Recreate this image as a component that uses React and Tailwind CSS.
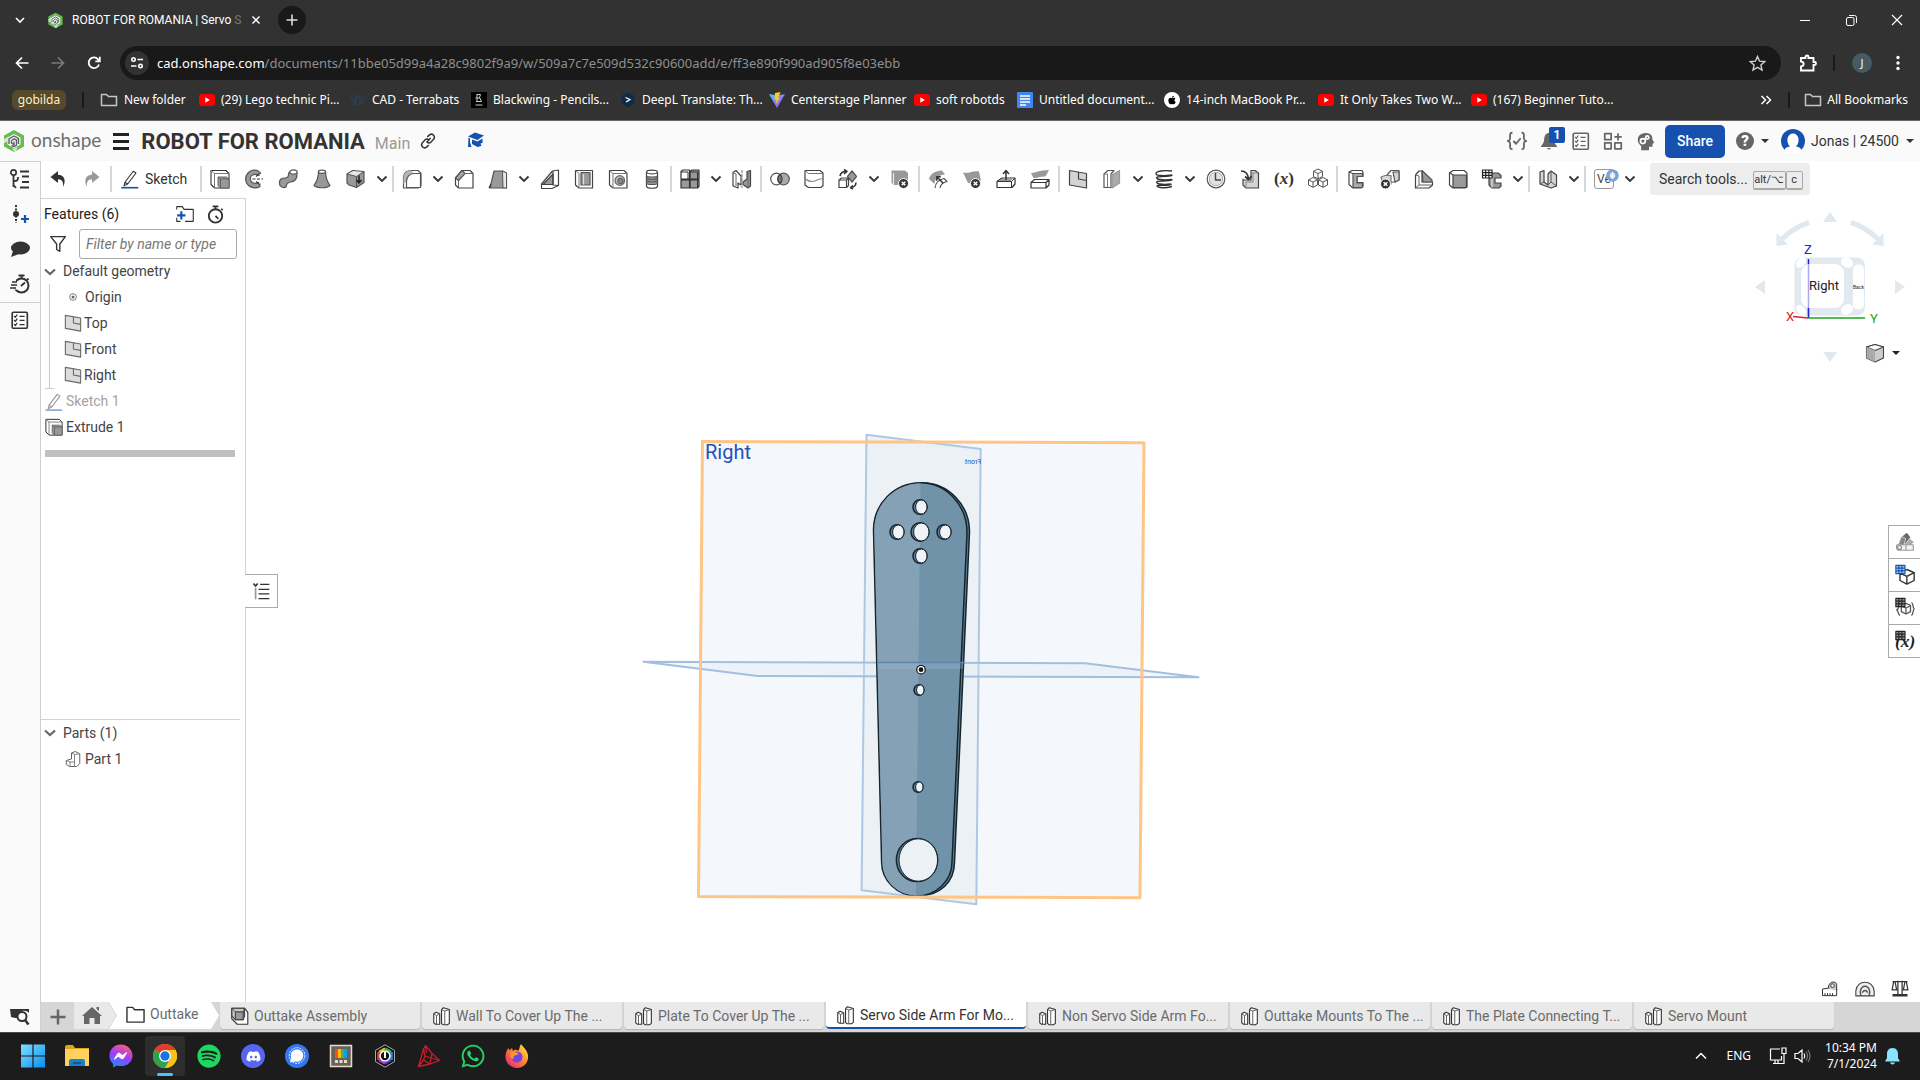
import React from "react";
import { FaSpotify, FaDiscord, FaWhatsapp, FaApple } from "react-icons/fa";

const D = "#333333";
const G = "#999999";
const L = "#d4d4d4";

function Svg({ s = 24, vb = "0 0 24 24", label, className = "", children }) {
  return (
    <svg width={s} height={s} viewBox={vb} fill="none" stroke={D} strokeWidth="1.2" strokeLinejoin="round" className={"shrink-0 " + className} aria-label={label} aria-hidden={label ? undefined : true}>
      {children}
    </svg>
  );
}

const xBadge = (cx, cy) => (
  <>
    <circle cx={cx} cy={cy} r="5" fill={D} stroke="#fff" strokeWidth="1" />
    <path d={`M${cx - 1.8} ${cy - 1.8}l3.6 3.6m0-3.6l-3.6 3.6`} stroke="#fff" strokeWidth="1.5" />
  </>
);

const icons = {
  undo: <path d="M12 4L4.5 10L12 16V12.3C16 12.3 17.5 15 17.2 20C20.5 13 18 8 12 7.8Z" fill={D} stroke="none" />,
  redo: <path d="M12 4L19.5 10L12 16V12.3C8 12.3 6.5 15 6.8 20C3.5 13 6 8 12 7.8Z" fill={G} stroke="none" />,
  extrude: (
    <>
      <path d="M3 3.5H18L21 6.5V21H6.5L3 17.5Z" fill="#fff" strokeWidth="1.1" />
      <path d="M3 3.5L6.5 6.5H21M6.5 6.5V21" stroke="#777" strokeWidth="1" />
      <path d="M10 10H18.500L21 12V21H12.500L10 18.5Z" fill={G} stroke="#666" strokeWidth="1" />
      <path d="M10 10L12.500 12H21M12.500 12V21" stroke="#555" strokeWidth=".8" />
    </>
  ),
  revolve: (
    <>
      <path d="M17 4.5C14 2.5 9 2.5 6 6C2.5 10 3 15.5 6.5 18.5C10 21.5 15 21.5 18 19.5L16.5 15.5C14 17 10.5 16.5 9 14C7.8 12 8.3 9 10.5 8C12.5 7 15 7.3 17 8.5Z" fill={G} stroke="#555" />
      <path d="M10.5 12H21M14 9.5L19 5.5M14 14.5L18.5 17.5" strokeDasharray="3 1.5" />
    </>
  ),
  sweep: (
    <>
      <path d="M3.500 16.500C3 12.500 5.500 11 9 11C12 11 12.500 9.500 12.500 7.500C12.500 5.500 13.500 4.500 15 4L21 5.500C21.500 12 19 14.500 14.500 15C11.500 15.500 10.500 16.500 10.200 19.500C8.500 21.500 3.800 20.500 3.500 16.500Z" fill={G} stroke="#555" />
      <ellipse cx="17.500" cy="5" rx="3.600" ry="2.100" fill="#fff" stroke="#555" />
    </>
  ),
  loft: (
    <>
      <path d="M8.5 4.5C8.5 11 6.5 15 4 18.5C7 21.5 17 21.5 20 18.5C17.5 15 15.5 11 15.5 4.5Z" fill={G} stroke="#555" />
      <ellipse cx="12" cy="4.8" rx="3.6" ry="1.6" fill="#fff" stroke="#555" />
    </>
  ),
  thicken: (
    <>
      <path d="M3 7L9 3.5L16 6L20 4.5V15.5L12.5 20.5L5 18L3 16Z" fill={G} stroke="#555" />
      <path d="M3 7L9 3.500L20 4.500L12.500 9.500Z" fill="#e6e6e6" stroke="#555" strokeWidth="1" />
      <path d="M12.500 9.500V20.500" stroke="#555" />
      <path d="M15 8.500V16M12.5 13L15 16L17.5 13" stroke="#222" strokeWidth="1.6" />
    </>
  ),
  fillet: (
    <>
      <path d="M3.5 21V10C4 6 7 3.5 11 3.5H18L21 6.5V18.5L18 21Z" fill="#fff" stroke="#555" />
      <path d="M3.5 10C4 6 7 3.5 11 3.5L14 6.500C9.500 7.500 7 10 6.500 14L3.500 17Z" fill="#b5b5b5" stroke="none" />
      <path d="M6.500 21V14C7 9.500 10 6.800 14 6.500H20.500V20.500H6.500" fill="#fff" stroke="#555" />
    </>
  ),
  chamfer: (
    <>
      <path d="M3.5 11L10 3.5H18L21 6.5V21H6.5L3.5 18Z" fill="#fff" stroke="#444" />
      <path d="M3.5 11L10 3.5L13 6.5L6.5 13.5Z" fill="#aaa" stroke="#555" />
      <path d="M13 6.5H21M6.5 13.5V21" stroke="#666" strokeWidth="1" />
    </>
  ),
  draft: (
    <>
      <path d="M8 4H16.5L20.5 6V21H4Z" fill={G} stroke="#555" />
      <path d="M16.500 4L20.500 6V21H17Z" fill="#e8e8e8" stroke="#555" strokeWidth="1" />
      <path d="M3 21L5 17" />
    </>
  ),
  rib: (
    <>
      <path d="M14.5 4L20.5 3V18.5L14 21.5H3.5V17Z" fill="#fff" stroke="#444" />
      <path d="M15 7L5 17.5H15Z" fill={G} stroke="#444" />
      <path d="M15 4V18L20.5 18.5M3.5 17.5H15" stroke="#444" />
    </>
  ),
  shell: (
    <>
      <path d="M3.5 3.5H20.5V21H7L3.5 18Z" fill="#fff" stroke="#444" />
      <path d="M7 6.5V21M3.5 3.5L7 6.5" stroke="#777" strokeWidth="1" />
      <path d="M9 5.500H18V18H9Z" fill={G} stroke="#555" />
      <path d="M11.5 7V17.500" stroke="#ddd" />
    </>
  ),
  hole: (
    <>
      <path d="M3.5 3.5H18L21 6.5V21H7L3.5 18Z" fill="#fff" stroke="#444" />
      <path d="M3.5 3.5L7 6.5H21M7 6.5V21" stroke="#777" strokeWidth="1" />
      <circle cx="13.8" cy="13.5" r="4.800" fill="#bbb" stroke="#666" />
      <circle cx="14.5" cy="14" r="2.6" fill="#888" stroke="#666" />
    </>
  ),
  thread: (
    <>
      <path d="M6.5 5V19C6.5 22 17.5 22 17.5 19V5C17.5 2.5 6.5 2.5 6.5 5Z" fill="#fff" stroke="#444" />
      <path d="M6.5 8.5C6.5 10.5 17.5 10.5 17.5 8.5V16C17.5 18 6.5 18 6.5 16Z" fill={G} stroke="#555" />
      <path d="M6.5 5C6.5 7.5 17.5 7.5 17.5 5M6.5 11C9 13 15 13 17.5 11M6.5 13.5C9 15.5 15 15.5 17.5 13.5" stroke="#555" />
    </>
  ),
  pattern: (
    <>
      <path d="M3 4.5L5 3H11.5V12H3Z" fill="#fff" />
      <path d="M12 4.5L14 3H21V12H12ZM3 13H11.5V21H3ZM12 13H21V19.5L19.5 21H12Z" fill={G} />
      <path d="M3 5H10V12M3 12.500H21M11.700 3V21M19.500 5V21M12 5H19.500" strokeWidth="1" />
    </>
  ),
  mirror: (
    <>
      <path d="M3 5.500L6 3.500L11 9V18L8 16V21L3 19Z" fill="#fff" stroke="#444" />
      <path d="M13 15L17 12V4.500L20.500 3.500V19L18 21L13 17.500Z" fill={G} stroke="#444" />
      <path d="M12 3V21" stroke="#888" strokeDasharray="3 1" />
      <path d="M3 5.500L6 7V19M18 5V21" stroke="#666" strokeWidth="1" />
    </>
  ),
  bool: (
    <>
      <circle cx="8.5" cy="12" r="5.8" fill="#fff" stroke="#555" />
      <circle cx="15.5" cy="12" r="5.8" fill="#aaa" stroke="#555" />
      <path d="M12 7.5A5.8 5.8 0 0 1 12 16.5A5.8 5.8 0 0 1 12 7.5Z" fill="#777" stroke="#444" />
    </>
  ),
  split: (
    <>
      <path d="M3 3.5H18L21 6V18.5L19 20.5H6.5L3 18Z" fill="#fff" stroke="#444" />
      <path d="M3 3.5L6.5 6.5H21" stroke="#777" strokeWidth="1" />
      <path d="M2 10.5C6 14.5 10 15.5 14 13.5S20 12 22 11.5" stroke="#888" />
    </>
  ),
  transform: (
    <>
      <path d="M16 4L20.5 9.5L16 15L11.5 9.5Z" fill={G} stroke="#555" />
      <path d="M3 13L5.5 11H12.5V18.5L10.5 20.5H3ZM3 13H10.5V20.5M10.5 13L12.5 11" fill="#fff" stroke="#444" />
      <path d="M4 9C4.5 6 6.5 4.5 10 4.5M8 2.5L11 4.5L8 7M20 15.5C20 18 18 20.5 14.5 20.5M17 18.5L14.5 20.5L17 22" strokeWidth="1.6" />
    </>
  ),
  delpart: (
    <>
      <path d="M3.5 3.5H17L20 6V18H6.5L3.5 16Z" fill={G} stroke="none" />
      <path d="M5.5 6V19" stroke="#e5e5e5" />
      {xBadge(15.5, 16.5)}
    </>
  ),
  modfillet: (
    <>
      <path d="M3 12C4 7 9 4 16 3.5L19 7.5C13 8 9 11 8.5 17Z" fill={G} stroke="none" />
      <path d="M9 21C9.500 16 13 12.500 18 11.500L21 14.500C17 15.500 14.500 17.500 14 21" fill="#fff" stroke="#555" />
      <path d="M17 16L11 10M10.800 13.800V9.800H14.800" strokeWidth="1.500" />
    </>
  ),
  delface: (
    <>
      <path d="M3 5.5C9 7 13 3 19 4.5L21 14C15 13 12 17 8 16Z" fill={G} stroke="none" />
      {xBadge(15.5, 16.5)}
    </>
  ),
  moveface: (
    <>
      <path d="M3 14.5L8 11H21V17L18 20.5H3Z" fill="#fff" />
      <path d="M5 14L9 11.5H19L16.5 14Z" fill={G} stroke="none" />
      <path d="M3 14.5H17.5V20.5M17.5 14.5L21 11" strokeWidth="1" />
      <path d="M12 13V4M9 7L12 3.500L15 7" strokeWidth="1.500" />
    </>
  ),
  repface: (
    <>
      <path d="M3 6C8 6 11 3 21 3L17.5 9.5C12 9 9 11.5 5.5 11Z" fill={G} stroke="none" />
      <path d="M3 15.5L6.5 12.5H21V18L18 21H3ZM3 15.5H18V21M18 15.5L21 12.5" fill="#fff" />
    </>
  ),
  plane: (
    <>
      <path d="M3.5 3.5L20.5 6.5V21L3.5 18Z" fill={L} stroke="#444" />
      <path d="M12.5 5V12L20.5 13.5" stroke="#444" />
    </>
  ),
  surface: (
    <>
      <path d="M4 7L8 3.5H14L11 7V20.5H4Z" fill="#fff" stroke="#555" />
      <path d="M12 8L19.5 3.5V16L12 21Z" fill="#aaa" stroke={G} />
      <path d="M4 7L7.5 7V20.5" stroke="#777" strokeWidth="1" />
    </>
  ),
  helix: (
    <path d="M20 4C12 3 4 4 4 6.500S12 9 20 8M5 10C3 12.500 10 13.500 20 12.500M5 14.500C3 17 10 18 19 17M5 18.500C5 21 13 21.500 20 19.500M20 8C21 9.500 8 9.500 5 10M20 12.500C21 14 8 14 5 14.500M19 17C20 18.500 8 18 5 18.500" strokeWidth="1.400" />
  ),
  clock: (
    <>
      <circle cx="12" cy="12" r="8.8" stroke="#555" />
      <circle cx="12" cy="12" r="6.700" fill="#e2e2e2" stroke="#999" strokeWidth=".8" />
      <path d="M11.5 6V13H17" stroke="#444" strokeWidth="1.4" />
    </>
  ),
  imp: (
    <>
      <path d="M5 12V18L8 21H20.5V6L17 3.5H13V13H5Z" fill={L} stroke="#444" />
      <path d="M13 6H20M8 21V15H15V6" stroke="#888" strokeWidth="1" />
      <path d="M3 4C7 4 10 6 10.5 12M7 9.5L10.5 12.5L13.5 9" strokeWidth="1.7" />
    </>
  ),
  cubes: (
    <>
      {[[12, 7], [7, 15.5], [17, 15.5]].map(([x, y], i) => (
        <path key={i} d={`M${x} ${y - 5}l4.5 2.3v5.2l-4.5 2.3l-4.5 -2.3v-5.2zM${x - 4.5} ${y - 2.7}l4.5 2.3l4.5 -2.3M${x} ${y - 0.4}v5.2`} fill="#fff" stroke="#555" strokeWidth="1" />
      ))}
    </>
  ),
  sheet: (
    <>
      <path d="M5 5L8 3.5H18L19 5.500V9.500H13V15.500H19V19L17 21H9L5 17.5Z" fill="#fff" stroke="#444" />
      <path d="M9 6.500H18.500V9.500H13V16H18.500V20.500H9Z" fill="#aaa" stroke="#555" />
      <path d="M5 5L9 6.5" stroke="#444" strokeWidth="1" />
    </>
  ),
  sheetx: (
    <>
      <path d="M9 8L13 3.5H21V13L17 15H10Z" fill="#fff" stroke="#555" />
      <path d="M15 5H21V13L17 15Z" fill={L} stroke="#555" />
      <path d="M3 10L7 8.5H13V17H5Z" fill={L} stroke="#777" />
      {xBadge(7.5, 17)}
    </>
  ),
  sheetcorner: (
    <>
      <path d="M3.5 8L7 4H10V15H20.5V18L17 21H3.5Z" fill="#fff" stroke="#444" />
      <path d="M10 3.5L20 13V15H11Z" fill={G} stroke="#555" />
      <path d="M3.5 8L7 9V18H20M7 18L3.5 21" stroke="#666" strokeWidth="1" />
    </>
  ),
  box: (
    <>
      <path d="M3.5 6L7 3.5H18L21 6V20L19 21H7L3.5 18Z" fill="#fff" stroke="#444" />
      <path d="M7 8H20.500V20.500H7Z" fill={G} stroke="#444" />
      <path d="M3.5 5.500L7 8" stroke="#444" />
    </>
  ),
  table: (
    <>
      <path d="M9 6H18L21 8.5V11H15V16H21V19L19 21H12L9 18Z" fill={G} stroke="#444" />
      <path d="M12 11V20.500" stroke="#e5e5e5" />
      <path d="M2.5 3H12V11H2.5ZM2.5 5.7H12M2.5 8.3H12M5.7 3V11M8.9 3V11" fill="#fff" stroke="#222" strokeWidth="1.2" />
    </>
  ),
  frame: (
    <>
      <path d="M4 5L8 3.5V15L12 18V7L15 4L20.500 8V19L15 21L4 17Z" fill={L} stroke="#444" />
      <path d="M8 15L4 17M12 18L15 15V4M15 15L20.500 19" stroke="#555" strokeWidth="1" />
    </>
  ),
  part: (
    <>
      <path d="M3 9.500L5.500 8L9.500 9.500V21H5L3 19.500Z" fill="#fff" />
      <path d="M3 9.500L6 11.500V21M6 11.500L9.500 10" stroke="#555" strokeWidth="1" />
      <path d="M11.500 5L13.500 3L20 5V20L18 21.500H13L11.500 20Z" fill="#fff" />
      <path d="M11.500 5L15 6.500V21M15 6.500L20 5" stroke="#555" strokeWidth="1" />
    </>
  ),
  asm: (
    <>
      <path d="M3 3.5H17L20.5 8V21H9L3 15Z" fill="#fff" />
      <path d="M7 7.5H15.5V16H7Z" fill={G} stroke="#555" />
      <path d="M3 3.5H17V12L15.500 16H7L3 12Z" fill={G} fillOpacity=".55" stroke="#444" />
      <path d="M3 3.500L7 7.500H15.500V16M15.500 7.500L17 3.500M7 7.500V16" stroke="#444" strokeWidth="1" />
    </>
  ),
  pencil: (
    <path d="M6.500 15.500L15.500 3.500L18.500 5.500L9.500 17.500L5.500 19.500ZM6.500 15.500L9.500 17.500" />
  ),
  checklist: (
    <>
      <rect x="3.5" y="3.5" width="16.5" height="17.5" rx="1.5" fill="#fff" strokeWidth="1.8" />
      <path d="M5.5 7.5L7 9L9 6M5.5 12L7 13.5L9 10.5M5.5 16.5L7 18L9 15M11.5 8H17M11.5 12.5H17M11.5 17H17" strokeWidth="1.4" />
    </>
  ),
  folder: <path d="M3 20V4.5H9L11 7H21V20Z" fill="#fff" strokeWidth="1.5" />,
  watch: (
    <>
      <circle cx="12" cy="13.5" r="7" strokeWidth="2" />
      <path d="M12 6.5V3.5M9 3.5H15M18 6L19.5 7.5M12 13.5L15 16.5" strokeWidth="1.8" />
    </>
  ),
};

const toolbar = [
  "extrude", "revolve", "sweep", "loft", "thicken", "v", "|", "fillet", "v", "chamfer", "draft", "v", "rib", "shell", "hole", "thread", "|",
  "pattern", "v", "mirror", "|", "bool", "split", "transform", "v", "delpart", "|", "modfillet", "delface", "moveface", "repface", "|",
  "plane", "surface", "v", "helix", "v", "clock", "imp", "x", "cubes", "|", "sheet", "sheetx", "sheetcorner", "box", "table", "v", "|", "frame", "v", "|", "ve", "v",
];

function Sep() {
  return <span className="mx-px h-[26px] w-[2px] shrink-0 bg-[#d6d6d6]" />;
}

function Chevron() {
  return (
    <svg width="12" height="12" viewBox="0 0 12 12" fill="none" stroke={D} strokeWidth="1.8" aria-hidden="true">
      <path d="M1.5 3.5L6 8L10.5 3.5" />
    </svg>
  );
}

function Caret() {
  return <span className="inline-block shrink-0 border-x-[4px] border-t-[4px] border-x-transparent border-t-[#333]" />;
}

function ToolItem({ name }) {
  if (name === "|") return <Sep />;
  if (name === "v")
    return <button aria-label="More" className="flex h-9 w-[18px] shrink-0 items-center justify-center"><Chevron /></button>;
  if (name === "x")
    return <button className="h-9 w-[34px] shrink-0 font-['Liberation_Serif',serif] text-[17px] font-bold text-[#333]">(<i>x</i>)</button>;
  if (name === "ve")
    return (
      <button className="relative flex h-9 w-[34px] shrink-0 items-center justify-center">
        <span className="h-5 w-5 rounded-[3px] border border-[#999] pl-[2px] text-left text-[12px] leading-[18px] text-[#444]">Ve</span>
        <svg className="absolute right-[2px] top-[8px]" width="13" height="13" viewBox="0 0 13 13" aria-hidden="true">
          <circle cx="6.5" cy="6.5" r="4.5" fill="#dfe9f5" stroke="#7ba3d3" strokeWidth="3.5" />
          <path d="M6.5 3V10" stroke="#fff" strokeWidth="1.5" />
        </svg>
      </button>
    );
  return <button aria-label={name} className="flex h-9 w-[34px] shrink-0 items-center justify-center"><Svg>{icons[name]}</Svg></button>;
}

/* ---------- browser frame ---------- */

function OnshapeMark({ s }) {
  return (
    <svg width={s} height={s} viewBox="0 0 24 24" fill="none" aria-hidden="true" className="shrink-0">
      <path d="M12 1L22 6.5V17.5L12 23L2 17.5V6.5Z" fill="#66bc51" />
      <path d="M12 5L18.5 8.5V15.5L12 19L5.5 15.5V8.5Z" fill="#fafafa" />
      <path d="M2 10L6 8L5.5 13L2 14ZM16 18L13 23L10 20Z" fill="#fafafa" opacity=".7" />
      <path d="M7 15V10L12 7L16.5 9.5V15M9.5 16.5L12 17.5L14.5 16V11L12 9.8L9.5 11.5V14L12 15.5V12.5" stroke="#5a6168" strokeWidth="1.4" />
    </svg>
  );
}

function YT() {
  return (
    <svg width="16" height="16" viewBox="0 0 16 16" aria-hidden="true">
      <rect x="0" y="2" width="16" height="12" rx="3" fill="#f00" />
      <path d="M6.3 5.3L10.8 8L6.3 10.7Z" fill="#fff" />
    </svg>
  );
}
function FolderOutline() {
  return (
    <svg width="18" height="16" viewBox="0 0 18 16" fill="none" stroke="#c7c7c7" strokeWidth="1.5" aria-hidden="true">
      <path d="M1.5 2.5H6.5L8.5 4.5H16.5V13.5H1.5Z" strokeLinejoin="round" />
    </svg>
  );
}
const bookmarkIcons = {
  folder: <FolderOutline />,
  yt: <YT />,
  w: (
    <svg width="16" height="16" viewBox="0 0 16 16" fill="none" stroke="#2d3f52" strokeWidth="1.3" aria-hidden="true"><path d="M1 3L4 13L8 3L12 13L15 3M4 3L7 13M9 13L12 3" /></svg>
  ),
  b: (
    <svg width="16" height="16" viewBox="0 0 16 16" fill="none" stroke="#ccc" aria-hidden="true"><rect width="16" height="16" fill="#000" stroke="none" /><path d="M6 2V10M6 2.5H9.5L8.5 5.5L10.5 9.5H5M4.5 6H9M4.5 13H11.5" /></svg>
  ),
  d: (
    <svg width="16" height="16" viewBox="0 0 16 16" fill="none" aria-hidden="true"><path d="M8 .5L14.5 4V11L8 15.5L1.5 11V4Z" fill="#0f2b46" /><path d="M5.5 5.500L10 7.5L6 10" stroke="#fff" strokeWidth="1.300" /></svg>
  ),
  vite: (
    <svg width="16" height="16" viewBox="0 0 16 16" aria-hidden="true">
      <defs><linearGradient id="vt" x1="0" y1="0" x2="1" y2="1"><stop offset="0" stopColor="#41d1ff" /><stop offset="1" stopColor="#bd34fe" /></linearGradient></defs>
      <path d="M0 2L8 16L16 2L8 3.5Z" fill="url(#vt)" /><path d="M11.5 0L6 1L5.5 8L7.5 7.5L7 12L11 6L9 6.3Z" fill="#ffc920" />
    </svg>
  ),
  doc: (
    <svg width="16" height="16" viewBox="0 0 16 16" aria-hidden="true"><rect width="16" height="16" rx="1" fill="#4285f4" /><path d="M3 4H13M3 7H13M3 10H13M3 13H9" stroke="#fff" strokeWidth="1.5" /></svg>
  ),
  apple: <span className="flex h-4 w-4 items-center justify-center rounded-full bg-white text-[10px] text-black"><FaApple /></span>,
};
const bookmarks = [
  ["folder", "New folder", "w-[99px]"],
  ["yt", "(29) Lego technic Pi...", "w-[151px]"],
  ["w", "CAD - Terrabats", "w-[121px]"],
  ["b", "Blackwing - Pencils...", "w-[149px]"],
  ["d", "DeepL Translate: Th...", "w-[149px]"],
  ["vite", "Centerstage Planner", "w-[145px]"],
  ["yt", "soft robotds", "w-[103px]"],
  ["doc", "Untitled document...", "w-[147px]"],
  ["apple", "14-inch MacBook Pr...", "w-[154px]"],
  ["yt", "It Only Takes Two W...", "w-[153px]"],
  ["yt", "(167) Beginner Tuto...", "w-[150px]"],
];

function Browser() {
  return (
    <header className="bg-[#323232] font-['Noto_Sans',sans-serif] text-[12px] text-white">
      <div className="flex h-[40px] items-center">
        <button aria-label="Search tabs" className="flex w-[40px] justify-center">
          <svg width="10" height="10" viewBox="0 0 10 10" fill="none" stroke="#fff" strokeWidth="1.7"><path d="M1 3L5 7L9 3" /></svg>
        </button>
        <div className="ml-[7px] flex w-[224px] items-center">
          <OnshapeMark s={17} />
          <span className="ml-[8px] flex-1 whitespace-nowrap font-['Roboto',sans-serif] text-[12px]">ROBOT FOR ROMANIA | Servo <span className="text-[#777]">S</span></span>
          <button aria-label="Close tab" className="mx-[10px]">
            <svg width="10" height="10" viewBox="0 0 10 10" fill="none" stroke="#fff" strokeWidth="1.5"><path d="M1.5 1.5L8.5 8.5M8.5 1.5L1.5 8.5" /></svg>
          </button>
        </div>
        <button aria-label="New tab" className="ml-[7px] flex h-7 w-7 items-center justify-center rounded-full bg-[#191919]">
          <svg width="12" height="12" viewBox="0 0 12 12" stroke="#ddd" strokeWidth="1.6"><path d="M6 .5V11.5M.5 6H11.5" /></svg>
        </button>
        <span className="flex-1" />
        <button aria-label="Minimize" className="flex w-[46px] justify-center"><svg width="10" height="10" viewBox="0 0 10 10" stroke="#fff"><path d="M0 5.5H10" /></svg></button>
        <button aria-label="Restore" className="flex w-[46px] justify-center"><svg width="11" height="11" viewBox="0 0 11 11" fill="none" stroke="#fff"><rect x=".5" y="2.5" width="7.5" height="8" rx="1.5" /><path d="M3 .5H8.5Q10.5 .5 10.5 2.5V8" /></svg></button>
        <button aria-label="Close" className="flex w-[46px] justify-center"><svg width="12" height="12" viewBox="0 0 12 12" stroke="#fff" strokeWidth="1.2"><path d="M1 1L11 11M11 1L1 11" /></svg></button>
      </div>

      <div className="flex h-[46px] items-center">
        <button aria-label="Back" className="ml-[4px] flex w-[36px] justify-center"><svg width="14" height="14" viewBox="0 0 14 14" fill="none" stroke="#fff" strokeWidth="1.7"><path d="M13.5 7H1.5M7 1.5L1.5 7L7 12.5" /></svg></button>
        <button aria-label="Forward" className="flex w-[36px] justify-center"><svg width="14" height="14" viewBox="0 0 14 14" fill="none" stroke="#7a7a7a" strokeWidth="1.7"><path d="M.5 7H12.5M7 1.5L12.5 7L7 12.5" /></svg></button>
        <button aria-label="Reload" className="flex w-[36px] justify-center"><svg width="14" height="14" viewBox="0 0 14 14" fill="none" stroke="#fff" strokeWidth="1.8"><path d="M12 8.5A5.3 5.3 0 1 1 11 3.3L12.5 5M12.8 .8V5.3H8.3" /></svg></button>
        <div className="ml-[8px] flex h-[34px] flex-1 items-center rounded-full bg-[#191919] pl-[5px] pr-[15px]">
          <button aria-label="Site information" className="flex h-6 w-6 items-center justify-center rounded-full bg-[#323232]">
            <svg width="14" height="14" viewBox="0 0 14 14" fill="none" stroke="#fff" strokeWidth="1.6"><circle cx="3.5" cy="3.5" r="1.7" /><path d="M7.5 3.5H13M1 10H6.5" /><circle cx="10.5" cy="10" r="1.7" /></svg>
          </button>
          <span className="ml-[8px] flex-1 whitespace-nowrap text-[13px] leading-[20px] text-[#8f8f8f]"><span className="text-white">cad.onshape.com</span>/documents/11bbe05d99a4a28c9802f9a9/w/509a7c7e509d532c90600add/e/ff3e890f990ad905f8e03ebb</span>
          <button aria-label="Bookmark this tab"><svg width="17" height="17" viewBox="0 0 17 17" fill="none" stroke="#d0d0d0" strokeWidth="1.4"><path d="M8.5 1.5L10.6 6.2L15.7 6.7L11.9 10L13 15L8.5 12.4L4 15L5.1 10L1.3 6.7L6.4 6.2Z" /></svg></button>
        </div>
        <button aria-label="Extensions" className="ml-[18px]"><svg width="18" height="18" viewBox="0 0 18 18" fill="none" stroke="#fff" strokeWidth="1.9"><path d="M2 4H6.5V3A1.5 1.5 0 0 1 9.5 3V4H14.5V8H15.5A1 1 0 0 1 15.5 11H14.5V16.5H2V12.5C5.5 12 5.5 8 2 7.5Z" /></svg></button>
        <span className="ml-[16px] h-4 w-[2px] bg-[#191919]" />
        <button className="ml-[17px] h-5 w-5 rounded-full bg-[#455a64] text-[11px] leading-5 text-white">J</button>
        <button aria-label="Menu" className="ml-[16px] mr-[12px] flex w-[20px] justify-center"><svg width="4" height="16" viewBox="0 0 4 16" fill="#fff"><circle cx="2" cy="2.5" r="1.7" /><circle cx="2" cy="8" r="1.7" /><circle cx="2" cy="13.5" r="1.7" /></svg></button>
      </div>

      <nav className="flex h-[35px] items-center border-b border-[#6a6668] pb-[6px]">
        <a href="#gobilda" className="ml-[12px] flex h-5 w-[54px] items-center justify-center rounded-md bg-[#574a2b] text-[#fdf0c4]">gobilda</a>
        <span className="ml-[16px] mr-[16px] h-4 w-[2px] bg-[#191919]" />
        {bookmarks.map(([ic, text, w], i) => (
          <a href="#bookmark" key={i} className={"flex shrink-0 items-center gap-[6px] whitespace-nowrap " + w}>{bookmarkIcons[ic]}{text}</a>
        ))}
        <span className="flex-1" />
        <button aria-label="More bookmarks"><svg width="12" height="10" viewBox="0 0 12 10" fill="none" stroke="#fff" strokeWidth="1.5"><path d="M1.5 1L5.5 5L1.5 9M6.5 1L10.5 5L6.5 9" /></svg></button>
        <span className="ml-[16px] mr-[14px] h-4 w-[2px] bg-[#191919]" />
        <a href="#all" className="mr-[12px] flex items-center gap-[5px] whitespace-nowrap"><FolderOutline />All Bookmarks</a>
      </nav>
    </header>
  );
}

/* ---------- application ---------- */

function AppHeader() {
  return (
    <header className="flex h-[40px] items-center bg-[#fafafa] text-[#333]">
      <a href="#home" className="ml-[2px] flex items-center gap-[5px]">
        <OnshapeMark s={24} />
        <span className="pb-[3px] font-['Lato',sans-serif] text-[19px] leading-6 text-[#6e6e6e]">onshape</span>
      </a>
      <button aria-label="Menu" className="ml-[12px] flex flex-col gap-[4px]">
        <span className="block h-[3px] w-4 bg-[#222]" /><span className="block h-[3px] w-4 bg-[#222]" /><span className="block h-[3px] w-4 bg-[#222]" />
      </button>
      <h1 className="ml-[12px] whitespace-nowrap pt-[2px] text-[22px] font-bold leading-7">ROBOT FOR ROMANIA</h1>
      <span className="ml-[10px] pt-[6px] text-[16px] text-[#999]">Main</span>
      <button aria-label="Link" className="ml-[9px]">
        <Svg s={18}><path d="M10 14L15.5 8M11 6.5L14.5 3.5C17.5 1.5 22 5 20 9L16 13.5C14 15 12 14.5 11 13.5M13 17.5L9.5 20.5C6.5 22.5 2 19 4 15L8 10.5C10 9 12 9.5 13 10.5" strokeWidth="2" /></Svg>
      </button>
      <button aria-label="Learning center" className="ml-[30px]">
        <svg width="20" height="20" viewBox="0 0 20 20" fill="#1651b0"><path d="M8 1.500L17 4.500L10.500 9L1 5.500ZM5 8.500L10.500 10.500L15.500 7.500V12L13.500 12.500L14.500 15L10.500 16L5 13ZM1.500 6.500L3 7.500V11L4.500 16H1Z" /></svg>
      </button>
      <span className="flex-1" />
      <div className="flex items-center text-[#555]">
        <button aria-label="Verify" className="flex w-8 justify-center"><Svg s={22}><path d="M7 3C4 3 4.5 5 4.5 8S4 11.5 2 12C4 12.5 4.5 13 4.5 16S4 21 7 21M17 3C20 3 19.5 5 19.5 8S20 11.5 22 12C20 12.5 19.5 13 19.5 16S20 21 17 21M8 12L11 15L16 9" stroke="#666" strokeWidth="2" /></Svg></button>
        <button aria-label="Notifications" className="relative flex w-8 justify-center">
          <Svg s={22}><path d="M12 3C7 4 7 8 6.5 12C6 15 4 16 3 18.5H21C20 16 18 15 17.5 12C17 8 17 4 12 3ZM9.5 19.5H14.5L12 21.5Z" fill="#666" stroke="none" /></Svg>
          <span className="absolute left-[16px] top-[-3px] h-4 w-4 rounded-[2px] bg-[#1651b0] text-center text-[12px] font-bold leading-4 text-white">1</span>
        </button>
        <button aria-label="Tasks" className="flex w-8 justify-center"><Svg s={22} className="opacity-75">{icons.checklist}</Svg></button>
        <button aria-label="Apps" className="flex w-8 justify-center"><Svg s={22}><path d="M3 4H10V10.5H3ZM3 14H10V20.5H3ZM14 14H21V20.5H14ZM17.5 3.5V11.5M13.5 7.5H21.5" stroke="#666" strokeWidth="1.9" /></Svg></button>
        <button aria-label="Labs" className="flex w-8 justify-center">
          <Svg s={21}><path d="M7 22V17C3 14 1.5 8 5.5 4.5C10 1 17 1.5 19.5 6L20 10L22 13.5L20 14.5V18H16V22Z" fill="#666" stroke="none" /><circle cx="9" cy="11.5" r="2.8" stroke="#fff" strokeWidth="2" /><circle cx="14" cy="7.5" r="1.8" stroke="#fff" strokeWidth="2" /></Svg>
        </button>
      </div>
      <button className="ml-[4px] h-[33px] w-[60px] rounded-[5px] bg-[#1651b0] text-[14px] font-medium text-white">Share</button>
      <button aria-label="Help" className="ml-[11px] flex items-center gap-[7px]">
        <span className="flex h-[18px] w-[18px] items-center justify-center rounded-full bg-[#666] text-[15px] font-black leading-none text-white">?</span>
        <Caret />
      </button>
      <button className="ml-[12px] mr-[6px] flex items-center whitespace-nowrap text-[14px]">
        <svg width="24" height="24" viewBox="0 0 24 24" aria-hidden="true"><circle cx="12" cy="12" r="12" fill="#1651b0" /><path d="M3 24C3 19 6 18 9 17.5C4.5 13 6 4.5 12 4.5S19.5 13 15 17.5C18 18 21 19 21 24Z" fill="#fff" /></svg>
        <span className="ml-[6px] mr-[7px]">Jonas | 24500</span>
        <Caret />
      </button>
    </header>
  );
}

function Toolbar() {
  return (
    <div className="flex h-[37px] shrink-0 items-center pb-px text-[#333]">
      <button aria-label="Undo" className="flex w-[34px] shrink-0 justify-center"><Svg>{icons.undo}</Svg></button>
      <button aria-label="Redo" className="flex w-[34px] shrink-0 justify-center"><Svg>{icons.redo}</Svg></button>
      <Sep />
      <button className="flex w-[86px] shrink-0 items-center gap-[4px] pl-[6px] text-[14px]">
        <Svg s={22}>{icons.pencil}<path d="M2.5 21.5H21" stroke="#1651b0" strokeWidth="1.800" /></Svg>Sketch
      </button>
      <Sep />
      {toolbar.map((n, i) => <ToolItem key={i} name={n} />)}
      <button className="ml-[11px] flex h-[32px] w-[160px] shrink-0 items-center whitespace-nowrap rounded-[3px] bg-[#ededed] pl-[9px] text-[14px]">
        Search tools...
        <kbd className="ml-[5px] mt-[3px] h-[19px] w-[33px] rounded-[2px] border border-b-2 border-[#aaa] text-center font-['Roboto',sans-serif] text-[11px] leading-4">alt/⌥</kbd>
        <kbd className="mt-[3px] h-[19px] w-[17px] rounded-[2px] border border-b-2 border-[#aaa] text-center font-['Roboto',sans-serif] text-[11px] leading-4">c</kbd>
      </button>
    </div>
  );
}

function Rail() {
  const cell = "flex h-[35px] items-center justify-center pb-[2px]";
  return (
    <nav className="flex w-[41px] shrink-0 flex-col border-r border-t border-[#cfcfcf] bg-[#fafafa]">
      <button aria-label="Feature list" className={cell}>
        <Svg><circle cx="5.5" cy="5.5" r="2.7" strokeWidth="1.7" /><path d="M5.5 8V20M5.5 18L8 21M5.5 14C10 14 10 13 10 10M12 4.5H21M14 9.5H21M14 15H21M12 20.5H21" strokeWidth="1.8" /></Svg>
      </button>
      <button aria-label="Add" className={cell}>
        <Svg><path d="M8 3V21" strokeWidth="2" strokeDasharray="2 1.5" /><circle cx="8" cy="12" r="3" fill={D} stroke="none" /><path d="M17 13V21M13 17H21" stroke="#1651b0" strokeWidth="2.2" /></Svg>
      </button>
      <button aria-label="Comments" className={cell}>
        <Svg><ellipse cx="12.5" cy="11" rx="9.5" ry="6.5" fill={D} stroke="none" /><path d="M5 14L3 20L11 17Z" fill={D} stroke="none" /></Svg>
      </button>
      <button aria-label="Versions" className={cell}>
        <Svg><circle cx="13.5" cy="13.5" r="7" strokeWidth="2" /><path d="M13.5 6V3.5M10.5 3.5H16.5M13 14L17 10.5M19 6.5L20.5 8" strokeWidth="1.8" /><path d="M1 12H9M1 15.5H9M3 9H8" stroke="#fafafa" strokeWidth="4" /><path d="M4 10H9M3 13H9M2 16H8" strokeWidth="1.3" /></Svg>
      </button>
      <span className="h-px bg-[#cfcfcf]" />
      <button aria-label="Checklist" className={cell}><Svg s={22}>{icons.checklist}</Svg></button>
      <span className="flex-1" />
      <button aria-label="Search document" className="flex h-[32px] items-center justify-center">
        <Svg><path d="M2 5H21V9C18 5 10 6 9 14H7L3 13Z" fill={D} stroke="none" /><circle cx="14" cy="12.5" r="4.5" fill="#fafafa" strokeWidth="2" /><path d="M17 16L20.5 20.5" strokeWidth="2.6" /></Svg>
      </button>
    </nav>
  );
}

function TreeChevron() {
  return <svg width="12" height="12" viewBox="0 0 12 12" fill="none" stroke="#666" strokeWidth="2.2" aria-hidden="true"><path d="M1 3.5L6 8L11 3.5" /></svg>;
}

function FeaturePanel() {
  const row = "flex h-[26px] items-center text-[14px]";
  return (
    <aside className="flex w-[205px] shrink-0 flex-col border-r border-t border-[#d2d2d2] bg-white text-[#444]">
      <div className="flex h-[30px] items-center pl-[3px] pr-[18px] text-[14px] text-[#222]">
        <span className="flex-1 whitespace-nowrap">Features (6)</span>
        <button aria-label="Add folder" className="mr-[8px]"><Svg s={22}><path d="M3 7V4H9L11 7H21V20H12" /><path d="M3 16V20H7" /><path d="M8 9V18M3.5 13.5H12.5" stroke="#1651b0" strokeWidth="2.3" /></Svg></button>
        <button aria-label="Rollback history"><Svg s={23}>{icons.watch}</Svg></button>
      </div>
      <div className="flex h-[30px] items-center pl-[6px]">
        <Svg s={22}><path d="M4 4H20L14 12V20L10.5 18V12Z" strokeWidth="1.5" /></Svg>
        <input aria-label="Filter" placeholder="Filter by name or type" className="ml-[10px] h-[30px] w-[158px] rounded-[3px] border border-[#aaa] bg-white pl-[6px] text-[14px] italic placeholder:text-[#777]" />
      </div>
      <div className="flex h-[25px] items-center gap-[7px] pl-[3px] text-[14px]"><TreeChevron />Default geometry</div>
      <ul className="ml-[8px] border-l border-[#ccc]">
        <li className={row + " gap-[8px] pl-[19px]"}><Svg s={8}><circle cx="12" cy="12" r="10" stroke="#666" strokeWidth="2.5" /><circle cx="12" cy="12" r="4.5" fill="#666" stroke="none" /></Svg>Origin</li>
        {["Top", "Front", "Right"].map((t) => (
          <li key={t} className={row + " gap-[2px] pl-[14px]"}><Svg s={18} vb="2 2 20 20" className="opacity-80">{icons.plane}</Svg>{t}</li>
        ))}
      </ul>
      <span className="ml-[4px] h-px w-[9px] bg-[#ccc]" />
      <div className="flex h-[25px] items-center gap-[3px] pl-[4px] text-[14px] text-[#a3a3a3]"><Svg s={18} vb="2 2 20 20" className="opacity-50">{icons.pencil}<path d="M2.5 21H21" stroke="#1651b0" strokeWidth="1.8" /></Svg>Sketch 1</div>
      <div className={row + " gap-[3px] pl-[4px]"}><Svg s={18} vb="2 2 20 20">{icons.extrude}</Svg>Extrude 1</div>
      <span className="ml-[4px] mt-[10px] h-[7px] w-[190px] bg-[#c0c0c0]" />
      <div className="mr-[5px] mt-[262px] flex h-[27px] items-center gap-[7px] border-t border-[#d2d2d2] pl-[3px] text-[14px]"><TreeChevron />Parts (1)</div>
      <div className={row + " gap-[3px] pl-[23px]"}>
        <Svg s={18}><path d="M3 14L10 12V4L15 2L21 5V18L17 22H7L3 19Z" fill="#fff" stroke="#555" /><path d="M3 14L8 16H14V6L10 4M14 16V22M14 6L21 5M8 16V22" stroke="#777" /></Svg>Part 1
      </div>
    </aside>
  );
}

const holes = [
  [920, 507, 7], [897, 532, 7], [920, 532, 9], [944, 532, 7], [920, 556, 7],
  [919, 690, 5], [918, 787, 5],
];

function Model() {
  return (
    <svg className="block h-full w-full" viewBox="246 198 1674 804" fill="none" strokeLinejoin="round" role="img" aria-label="Part model with reference planes">
      <path d="M702.5 441.5L1144 442.7L1140 897.7L698.5 896.5Z" fill="#f4f8fc" />
      <path d="M866.5 434.7L980.7 449L976.3 904.3L861.6 890.3Z" fill="#ecf1f6" stroke="#adc8e3" strokeWidth="2" />
      <path d="M643.5 661.7L1085 663.3L1198.5 677.3L757.6 676Z" fill="#dfe8f2" fillOpacity=".35" stroke="#a3bfe0" strokeWidth="2" />
      <g stroke="#16242c" strokeWidth="1.5">
        <path d="M922 482.700A47.500 49 0 0 1 969.500 532L954.500 862C954.500 882 940 896 918 896Z" fill="#5f8299" />
        <path d="M873.500 530A47 47.300 0 0 1 920.500 482.700A46.500 50 0 0 1 967 533L952 862A35.200 34 0 0 1 881.600 862Z" fill="#7093a9" />
      </g>
      <path d="M920.500 483.500L916 895.300C897 895.300 882.400 880 882.400 862L874.300 530C874.300 504 895 483.500 920.500 483.500Z" fill="#84a1b6" />
      <path d="M878 662H963.500L963 669H878.500Z" fill="#a6bed0" fillOpacity=".3" />
      <path d="M877.500 662.500H964" stroke="#5a86b4" strokeWidth="1.500" />
      {holes.map(([x, y, r], i) => (
        <g key={i} stroke="#16242c" strokeWidth="1.5">
          <ellipse cx={x} cy={y} rx={r} ry={r + 0.3} fill="#5f8299" />
          <ellipse cx={x + 1.3} cy={y} rx={r - 1.3} ry={r} fill="#f0f4f8" strokeWidth="1" />
        </g>
      ))}
      <ellipse cx="917" cy="860" rx="20.600" ry="21.600" fill="#5f8299" stroke="#16242c" strokeWidth="1.500" />
      <ellipse cx="918.300" cy="860" rx="19.300" ry="21.200" fill="#ecf1f6" stroke="#16242c" />
      <circle cx="921" cy="669.700" r="4.800" fill="#111" />
      <circle cx="921" cy="669.700" r="3" stroke="#fff" strokeWidth="1.300" />
      <path d="M702.5 441.5L1144 442.7L1140 897.7L698.5 896.5Z" stroke="#ffc584" strokeWidth="3" />
      <text x="705" y="459" fill="#2451b8" stroke="none" className="font-['Roboto',sans-serif] text-[20px]">Right</text>
      <text transform="translate(981 464) scale(-1 1)" fill="#2451b8" stroke="none" className="font-['Roboto',sans-serif] text-[7px]">Front</text>
    </svg>
  );
}

function ViewCube() {
  return (
    <div className="absolute right-[10px] top-[8px] w-[160px]">
      <svg width="160" height="160" viewBox="1750 206 160 160" fill="#e1e8ee" role="img" aria-label="View cube">
        <path d="M1830 212L1837 222H1823ZM1755 287L1765 280V294ZM1905 287L1895 280V294ZM1823 352H1837L1830 362Z" />
        <path d="M1809 222.5C1798 226 1790 231 1781 240" stroke="#e1e8ee" strokeWidth="5" fill="none" />
        <path d="M1776.5 233V246L1788 244.5Z" />
        <path d="M1851 222.5C1862 226 1870 231 1879 240" stroke="#e1e8ee" strokeWidth="5" fill="none" />
        <path d="M1883.5 233V246L1872 244.5Z" />
        <rect x="1794.5" y="257.5" width="70.5" height="58" rx="8" />
        <rect x="1801" y="264" width="43" height="44" rx="9" fill="#fff" />
        <rect x="1853" y="264.5" width="11" height="45" rx="5" fill="#fff" />
        <g fill="#fff">
          <ellipse cx="1801" cy="262.5" rx="6" ry="4" transform="rotate(-50 1801 262.5)" />
          <ellipse cx="1847" cy="262.5" rx="6.5" ry="5" transform="rotate(30 1847 262.5)" />
          <ellipse cx="1801" cy="310" rx="6" ry="4" transform="rotate(50 1801 310)" />
          <ellipse cx="1847" cy="309.5" rx="6.5" ry="5" transform="rotate(-30 1847 309.5)" />
        </g>
        <path d="M1808.5 264V318" stroke="#a9a9f0" strokeWidth="1.5" />
        <path d="M1808.5 259V264M1808.5 308V318" stroke="#2222dd" strokeWidth="1.5" />
        <path d="M1808 318H1865" stroke="#1aa51a" strokeWidth="1.5" />
        <path d="M1793 316.5L1808 318" stroke="#dd2222" strokeWidth="1.5" />
        <g className="font-['Roboto',sans-serif] text-[13px]">
          <text x="1804" y="254" fill="#2222dd">Z</text>
          <text x="1786" y="321" fill="#dd2222">X</text>
          <text x="1870" y="323" fill="#1aa51a">Y</text>
          <text x="1809" y="290" fill="#222">Right</text>
        </g>
        <text x="1853" y="289" fill="#222" className="font-['Roboto',sans-serif] text-[5px]">Back</text>
        <g stroke="#444" strokeWidth="1.1" strokeLinejoin="round">
          <path d="M1875 344.5L1883.5 347V358L1875 362L1866.5 358V347Z" fill="#ccc" />
          <path d="M1875 344.5L1883.5 347L1875 350.5L1866.5 347Z" fill="#fff" />
          <path d="M1875 350.5V362L1866.5 358V347Z" fill="#aaa" stroke="none" />
        </g>
        <path d="M1892 351H1900L1896 355Z" fill="#222" />
      </svg>
    </div>
  );
}

const grid = (c, f) => <path d="M2 1.5H12V10.5H2ZM2 4.5H12M2 7.5H12M5.3 1.5V10.5M8.6 1.5V10.5" fill={f} stroke={c} strokeWidth="1.2" />;

function Viewport() {
  const side = "flex h-[33px] w-[32px] items-center justify-center border border-b-0 border-r-0 border-[#aaa] bg-white last:h-[34px] last:border-b";
  return (
    <main className="relative min-w-0 flex-1">
      <Model />
      <div className="absolute inset-y-0 -left-px flex items-center pb-[18px]">
        <button aria-label="Toggle feature list" className="flex h-[34px] w-[33px] items-center justify-center border border-l-0 border-[#aaa] bg-white">
          <Svg s={20}><path d="M3 3L5.5 6L8 3" strokeWidth="2" /><path d="M5.5 8V22" stroke="#999" strokeWidth="2" /><path d="M11 4H22M9 10H22M9 15.5H22M9 21H22" strokeWidth="1.5" /></Svg>
        </button>
      </div>
      <ViewCube />
      <div className="absolute inset-y-0 right-0 flex flex-col items-end justify-center pb-[17px]">
        <button aria-label="Appearance" className={side}>
          <Svg s={22}><path d="M9 6L14 2L18 7L12 15Z" fill="#666" stroke="none" /><path d="M5 14L8 6L13 8L10 18Z" fill="#888" stroke="#fff" strokeWidth=".6" /><path d="M12 15L17 8L22 12L17 17Z" fill="#aaa" stroke="#fff" strokeWidth=".6" /><path d="M3 15H21V21H5Q2 21 3 15Z" fill="#f2f2f2" stroke="#999" /><path d="M13 15V21" stroke="#999" /><circle cx="6" cy="18" r="2.2" stroke="#888" /></Svg>
        </button>
        <button aria-label="Configurations" className={side}>
          <Svg s={22}><path d="M14 6L22 9.5V18L14 22L6.5 18V10ZM6.5 10L14 13.5L22 9.5M14 13.5V22" strokeWidth="1.500" />{grid("#1651b0", "#9fd0ff")}</Svg>
        </button>
        <button aria-label="Custom tables" className={side}>
          <Svg s={22}><path d="M13 7L18 9V16L13 18.5L8 16V9ZM8 10L13 12L18 9.5M13 12V18M19 6C21.5 7 20 11 22 13C20 15 21.5 19 19 20M6 10C4 12 5 13 3 14C5 15 4 19 6.5 20" stroke="#555" strokeWidth="1.4" />{grid("#222", "#999")}</Svg>
        </button>
        <button aria-label="Variables" className={side}>
          <Svg s={22}><text x="1" y="19" fill="#222" stroke="none" className="font-['Liberation_Serif',serif] text-[19px] font-bold italic">(x)</text>{grid("#222", "#999")}</Svg>
        </button>
      </div>
      <div className="absolute bottom-[2px] right-[10px] flex gap-[14px]">
        <button aria-label="Measure"><Svg s={20}><path d="M3 12L10 11L20 12V20H3ZM6 20V17M9 20V17M12 20V17M15 20V17" /><path d="M10 11C10 2 20 2 20 7V14" fill="#ccc" /><circle cx="15" cy="8" r="2.2" fill="#fff" /></Svg></button>
        <button aria-label="Angle"><Svg s={22}><path d="M2 19.5V14C3 1.5 21 1.5 22 14V19.5Z" stroke="#444" fill="#eee" /><path d="M7.5 19.5C5 9 12 9 12 9S19 9 16.5 19.5M9 16C11 13 13 13 15 16" stroke="#555" strokeWidth="1.6" /></Svg></button>
        <button aria-label="Mass properties"><Svg s={20}><path d="M3 3H21M9.5 2V18M14.5 2V18M4.5 3L2.5 13H8L6 3M18 3L16 13H21.5L19.5 3" strokeWidth="1.5" /><path d="M3 19.500H21" strokeWidth="3" /></Svg></button>
      </div>
    </main>
  );
}

const docTabs = ["Outtake Assembly", "Wall To Cover Up The ...", "Plate To Cover Up The ...", "Servo Side Arm For Mo...", "Non Servo Side Arm Fo...", "Outtake Mounts To The ...", "The Plate Connecting T...", "Servo Mount"];

function DocTabs() {
  return (
    <nav className="flex h-[30px] shrink-0 items-start bg-[#d6d6d6] text-[14px] text-[#6b6b6b]">
      <button aria-label="Add tab" className="flex h-[29px] w-[33px] items-center justify-center"><svg width="16" height="16" viewBox="0 0 16 16" stroke="#666" strokeWidth="2.5"><path d="M8 .5V15.5M.5 8H15.5" /></svg></button>
      <button aria-label="Home" className="flex h-[27px] w-[42px] items-center bg-[#e9e9e9] pl-[8px] [clip-path:polygon(0_0,34px_0,42px_50%,34px_100%,0_100%)]">
        <svg width="20" height="19" viewBox="0 0 20 19" fill="#666"><path d="M10 1L20 10H18V18H12.5V12H7.5V18H2V10H0ZM14.5 1H17V5L14.5 3Z" /></svg>
      </button>
      <button className="-ml-[7px] flex h-[27px] w-[110px] items-center gap-[5px] bg-white pb-[2px] pl-[17px] [clip-path:polygon(0_0,102px_0,110px_50%,102px_100%,0_100%,8px_50%)]"><Svg s={19} vb="2 2 20 20">{icons.folder}</Svg>Outtake</button>
      <div className="flex min-w-0 flex-1 gap-[2px] pl-px">
        {docTabs.map((t, i) => (
          <button key={t} className={"flex h-[27px] w-[200px] min-w-0 items-center gap-[3px] whitespace-nowrap rounded-b-[4px] pl-[9px] pt-px " + (i === 3 ? "border-b-2 border-[#1651b0] bg-white text-[#333]" : "bg-[#e9e9e9] shadow-[0_1px_1px_#b5b5b5]")}>
            <Svg s={22}>{icons[i === 0 ? "asm" : "part"]}</Svg>{t}
          </button>
        ))}
      </div>
    </nav>
  );
}

/* ---------- taskbar ---------- */

const tasks = [
  ["Explorer", <svg width="24" height="24" viewBox="0 0 24 24"><path d="M0 3Q0 1 2 1H8L10 4H24V22H0Z" fill="#e0a21b" /><path d="M0 5H24V21Q24 22 23 22H1Q0 22 0 21Z" fill="#ffd25e" /><path d="M4 22V17Q4 15 6 15H18Q20 15 20 17V22Z" fill="#1b80cc" /><path d="M8 18H16V20H8Z" fill="#0a5a9c" /></svg>],
  ["Messenger", <svg width="24" height="24" viewBox="0 0 512 512"><defs><linearGradient id="ms" x1="0.3" y1="1" x2=".7" y2="0"><stop offset="0" stopColor="#1b8cff" /><stop offset=".5" stopColor="#a03cff" /><stop offset="1" stopColor="#ff5f6d" /></linearGradient></defs><path d="M256 8C115 8 10 110 10 248c0 72 30 134 78 177v76l80-42c28 8 57 12 88 12 141 0 246-102 246-223S397 8 256 8Z" fill="url(#ms)" /><path d="M105 318l72-115c12-19 36-23 54-10l58 43 78-59c11-8 24 4 17 16l-72 114c-12 19-36 23-54 10l-58-43-78 59c-10 8-24-4-17-15Z" fill="#fff" /></svg>],
  ["Chrome", <svg width="24" height="24" viewBox="0 0 24 24"><circle cx="12" cy="12" r="12" fill="#fbc116" /><path d="M12 12L1.6 6A12 12 0 0 1 22.4 6H12Z" fill="#e33b2e" /><path d="M12 12L1.6 6A12 12 0 0 0 12 24L17.2 15Z" fill="#2ba24c" /><path d="M12 12L22.4 6A12 12 0 0 1 12 24L17.2 15Z" fill="#fbc116" /><circle cx="12" cy="12" r="6" fill="#fff" /><circle cx="12" cy="12" r="4.7" fill="#1a73e8" /></svg>],
  ["Spotify", <FaSpotify size={24} color="#1ed760" />],
  ["Discord", <span className="flex h-6 w-6 items-center justify-center rounded-full bg-[#5865f2]"><FaDiscord size={15} color="#fff" /></span>],
  ["Signal", <svg width="24" height="24" viewBox="0 0 24 24"><circle cx="12" cy="12" r="12" fill="#3376f0" /><circle cx="12" cy="11.5" r="6.3" fill="#fff" /><path d="M6 14L5 18.5L10 17.5Z" fill="#fff" /><circle cx="12" cy="11.5" r="7.8" fill="none" stroke="#fff" strokeDasharray="2 1" /></svg>],
  ["Store", <svg width="24" height="24" viewBox="0 0 24 24"><rect x="1.5" y="1.5" width="21" height="21" fill="#6a625a" stroke="#e8dcc8" strokeWidth="1.5" /><path d="M6 5H9V14H6Z" fill="#f25022" /><path d="M9 5H12V14H9Z" fill="#ffb900" /><path d="M12 5H15V14H12Z" fill="#4caf50" /><path d="M15 5H18V14H15Z" fill="#00a4ef" /><path d="M6 16H9V19H6ZM10.5 16H13.5V19H10.5ZM15 16H18V19H15Z" fill="#e8dcc8" /></svg>],
  ["OpenRGB", <svg width="24" height="24" viewBox="0 0 24 24" fill="none"><path d="M12 .8L21.5 6.4V17.6L12 23.2L2.5 17.6V6.4Z" fill="#111" stroke="#aaa" /><path d="M6 8L12 4.5" stroke="#e8c020" strokeWidth="2.5" /><path d="M12 4.5L18 8" stroke="#30c040" strokeWidth="2.5" /><path d="M18.5 8V16" stroke="#2090e0" strokeWidth="2.5" /><path d="M18 16L12 19.5" stroke="#4040e0" strokeWidth="2.5" /><path d="M12 19.5L6 16" stroke="#c030d0" strokeWidth="2.5" /><path d="M5.5 16V8" stroke="#e04030" strokeWidth="2.5" /><circle cx="12" cy="12" r="5" fill="#111" stroke="#fff" strokeWidth="1.6" /><path d="M12 8V14" stroke="#fff" strokeWidth="2" /></svg>],
  ["Reflector", <svg width="24" height="24" viewBox="0 0 24 24" fill="none" stroke="#c41e2c" strokeWidth="1.3" strokeLinejoin="round"><path d="M8.500 1.500L15 9.500L14 14L8 12L6.500 5ZM8 12L6.500 16L1.500 22.500L6.500 5M6.500 16L13 20L1.500 22.500M14 14L22.500 16.500L13 20L14 14ZM15 9.500L22.500 16.500M8.500 1.500L9.500 9" /></svg>],
  ["WhatsApp", <FaWhatsapp size={26} color="#25d366" />],
  ["Firefox", <svg width="24" height="24" viewBox="0 0 24 24"><defs><linearGradient id="fx" x1="1" y1="0" x2="0" y2="1"><stop offset="0" stopColor="#fff44f" /><stop offset=".45" stopColor="#ff8a2a" /><stop offset="1" stopColor="#e31587" /></linearGradient></defs><path d="M16 0C18 3 22 6 23 11C24 19 18 24 12 24S0 19 .5 12C.8 8 2 6 3.5 4L4.5 6.5L7 4L8 7C10 5 12 6 13 7C15 5 14 3 16 0Z" fill="url(#fx)" /><circle cx="12" cy="13" r="5.5" fill="#7542e5" /><path d="M5 9C8 7 12 8 14 10L10 11.5C8 12 8 14 9 15C6 15 5 12 5 9Z" fill="#ff9a2a" /></svg>],
];

function Taskbar() {
  return (
    <footer className="flex h-[48px] shrink-0 items-center border-t border-[#4a4a4a] bg-[#1c1c1c] pb-px font-['Noto_Sans',sans-serif] text-[12px] text-white">
      <button aria-label="Start" className="ml-[11px] flex w-[44px] justify-center">
        <svg width="24" height="24" viewBox="0 0 24 24"><defs><linearGradient id="win" x1="0" y1="0" x2="1" y2="1"><stop offset="0" stopColor="#7fe0ff" /><stop offset="1" stopColor="#0a8cf0" /></linearGradient></defs><path d="M0 .5H11.4V11.4H0ZM12.6 .5H24V11.4H12.6ZM0 12.6H11.4V23.5H0ZM12.6 12.6H24V23.5H12.6Z" fill="url(#win)" /></svg>
      </button>
      {tasks.map(([n, ic]) => (
        <button key={n} aria-label={n} className={"relative mx-[2px] flex h-10 w-10 items-center justify-center rounded-[4px] " + (n === "Chrome" ? "bg-[#2d2d2d]" : "")}>
          {ic}
          {n === "Chrome" && <span className="absolute bottom-0 left-3 h-[3px] w-4 rounded-full bg-[#4cc2ff]" />}
        </button>
      ))}
      <span className="flex-1" />
      <button aria-label="Hidden icons"><svg width="12" height="12" viewBox="0 0 12 12" fill="none" stroke="#fff" strokeWidth="1.5"><path d="M1 8.5L6 3.5L11 8.5" /></svg></button>
      <button className="ml-[20px]">ENG</button>
      <button aria-label="Network and volume" className="ml-[18px] flex items-center gap-[7px]">
        <svg width="18" height="18" viewBox="0 0 18 18" fill="none" stroke="#fff" strokeWidth="1.2"><path d="M11 2H1.5V13H12.5V9M4 16.5H11M6 13V16.5M9 13V16.5M13 1H17V6.5H13ZM15 6.5V16.5H11" /></svg>
        <svg width="17" height="16" viewBox="0 0 17 16" fill="none" stroke="#fff" strokeWidth="1.2"><path d="M1 5.5H4L8 2V14L4 10.5H1ZM10 5.5Q11.5 8 10 10.5" /><path d="M12 3.5Q15 8 12 12.5M14 2Q18 8 14 14" stroke="#777" /></svg>
      </button>
      <button className="ml-[14px] text-right leading-4">10:34 PM<br />7/1/2024</button>
      <button aria-label="Notifications" className="ml-[8px] mr-[20px]"><svg width="15" height="18" viewBox="0 0 15 18" fill="#8be4ff"><path d="M7.5 1C3.5 1 2 4 2 7V11L0 14.5H15L13 11V7C13 4 11.5 1 7.5 1ZM5 15.5H10Q9.5 17.5 7.5 17.5T5 15.5Z" /></svg></button>
    </footer>
  );
}

export default function App() {
  return (
    <div className="flex min-h-screen flex-col overflow-hidden bg-white font-['Roboto',sans-serif]">
      <Browser />
      <AppHeader />
      <div className="flex flex-1">
        <Rail />
        <div className="flex min-w-0 flex-1 flex-col">
          <Toolbar />
          <div className="flex flex-1">
            <FeaturePanel />
            <Viewport />
          </div>
          <DocTabs />
        </div>
      </div>
      <Taskbar />
    </div>
  );
}
